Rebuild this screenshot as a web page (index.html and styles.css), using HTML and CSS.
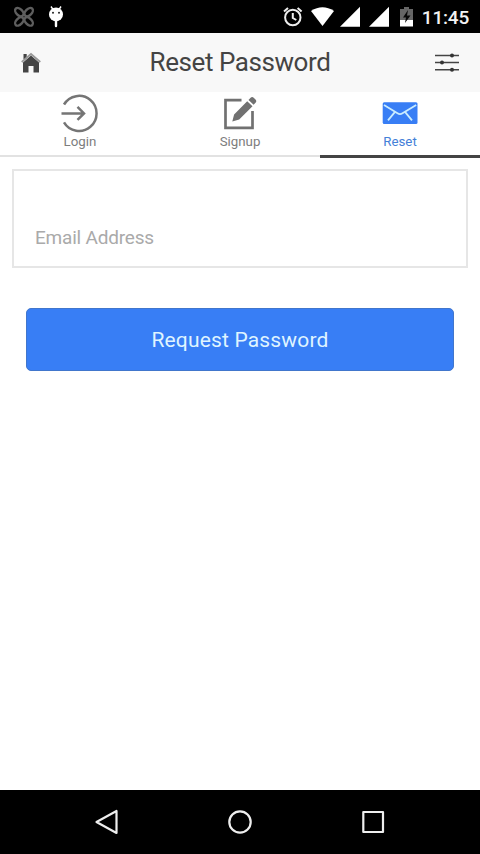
FILE: index.html
```html
<!DOCTYPE html>
<html lang="en">
<head>
<meta charset="utf-8">
<meta name="viewport" content="width=device-width, initial-scale=1">
<title>Reset Password</title>
<link rel="stylesheet" href="styles.css">
</head>
<body>
<div class="screen">
  <div class="status">
    <div class="status-group">
      <svg class="knot" width="22" height="22" viewBox="0 0 22 22" aria-hidden="true">
        <g fill="none" stroke="#5e5e5e" stroke-width="2.400">
          <ellipse cx="6.300" cy="6.100" rx="5" ry="3.100" transform="rotate(45 6.300 6.100)"/>
          <ellipse cx="15.700" cy="6.100" rx="5" ry="3.100" transform="rotate(-45 15.700 6.100)"/>
          <ellipse cx="6.300" cy="15.500" rx="5" ry="3.100" transform="rotate(-45 6.300 15.500)"/>
          <ellipse cx="15.700" cy="15.500" rx="5" ry="3.100" transform="rotate(45 15.700 15.500)"/>
        </g>
      </svg>
      <svg width="16" height="22" viewBox="0 0 16 22" aria-hidden="true">
        <path d="M3 .5l2 3M13 .5l-2 3" stroke="#fff" stroke-width="1.400"/>
        <circle cx="8" cy="8.400" r="7" fill="#fff"/>
        <path d="M8 15v5" stroke="#fff" stroke-width="2.400" stroke-linecap="round"/>
        <circle cx="5" cy="6.800" r="1" fill="#222"/><circle cx="11" cy="6.800" r="1" fill="#222"/>
      </svg>
    </div>
    <div class="status-group right">
      <svg width="20" height="22" viewBox="0 0 20 22" fill="none" stroke="#eee" stroke-width="2" aria-hidden="true">
        <circle cx="9.800" cy="11.500" r="7.700"/><path d="M9.800 7v5l3.500 2M1 5.500l4-3.500M18.600 5.500l-4-3.500"/>
      </svg>
      <svg class="wifi" width="24" height="22" viewBox="0 0 24 22" aria-hidden="true"><path d="M0 5Q11.500-2.500 23 5L11.500 20z" fill="#fff"/></svg>
      <svg class="signal" width="20" height="22" viewBox="0 0 20 22" aria-hidden="true"><path d="M20 .8v20H0z" fill="#fff"/></svg>
      <svg class="signal" width="20" height="22" viewBox="0 0 20 22" aria-hidden="true"><path d="M20 .8v20H0z" fill="#fff"/></svg>
      <svg class="battery" width="13" height="22" viewBox="0 0 13 22" aria-hidden="true">
        <path d="M0 3h4V1h5v2h4v12H0z" fill="#666"/><path d="M0 14h13v6.500H0z" fill="#fff"/><path d="M8 4L3 11.500h3L5 17l5.500-7.500H7z" fill="#080808"/>
      </svg>
      <span class="time">11:45</span>
    </div>
  </div>

  <header class="header">
    <svg width="20" height="22" viewBox="0 0 20 22" aria-hidden="true">
      <path d="M2.500 2h3.200v5H2.500z" fill="#444"/>
      <path d="M10 3.500L18 10.500v10h-5.500V14h-5v6.500H2v-10z" fill="#444"/>
      <path d="M.7 10L10 2l9.300 8" fill="none" stroke="#999" stroke-width="1.800"/>
    </svg>
    <h1 class="title">Reset Password</h1>
    <svg width="24" height="20" viewBox="0 0 24 20" aria-hidden="true">
      <path d="M0 2.500h24M0 9.500h24M0 16.800h24" stroke="#444" stroke-width="1.500"/>
      <g fill="#333"><circle cx="17" cy="2.500" r="2"/><circle cx="7" cy="9.500" r="2"/><circle cx="17" cy="16.800" r="2"/></g>
    </svg>
  </header>

  <nav class="tabs">
    <a class="tab">
      <svg width="40" height="40" viewBox="0 0 40 40" fill="none" stroke="#757575" stroke-width="2.500" aria-hidden="true">
        <path d="M4 11.500A17.500 17.500 0 1 1 4 29.300M1.500 20.400H24M17.500 13.900L24 20.400l-6.500 6.500"/>
      </svg>
      <span>Login</span>
    </a>
    <a class="tab">
      <svg width="40" height="40" viewBox="0 0 40 40" aria-hidden="true">
        <path d="M21.500 7.200H5.500v27.600h27V18" fill="none" stroke="#717171" stroke-width="2.700"/>
        <path d="M12.300 28.600l1.800-7L27.200 8.200l5.300 5L19.200 26.500zM28.500 6.900l2.100-2.100c1-1 2.100-1 3.100 0l1.800 1.800c1 1 1 2.100 0 3.100l-1.900 2.100z" fill="#717171"/>
      </svg>
      <span>Signup</span>
    </a>
    <a class="tab active">
      <svg width="40" height="40" viewBox="0 0 40 40" aria-hidden="true">
        <rect x="2.700" y="9.300" width="34.800" height="21.700" rx="1.500" fill="#387ef5"/>
        <path d="M4 12l13.500 8.300q2.500 1.600 5 0L36.200 12M14.800 19.200L8 27.300M25.200 19.200l6.800 8.100" fill="none" stroke="#c9ecff" stroke-width="1.800"/>
      </svg>
      <span>Reset</span>
    </a>
  </nav>

  <main class="content">
    <div class="field">Email Address</div>
    <div class="submit">Request Password</div>
  </main>

  <footer class="navbar">
    <svg width="26" height="28" viewBox="0 0 26 28" aria-hidden="true"><path d="M22.500 3v22L2.500 14z"/></svg>
    <svg width="26" height="28" viewBox="0 0 26 28" aria-hidden="true"><circle cx="13" cy="14" r="10.700"/></svg>
    <svg width="26" height="28" viewBox="0 0 26 28" aria-hidden="true"><rect x="3.300" y="4" width="19.700" height="20"/></svg>
  </footer>
</div>
</body>
</html>
```
FILE: styles.css
```css
* { box-sizing: border-box; }

body {
  margin: 0;
  font-family: Roboto, sans-serif;
  background: #fff;
}

svg { display: block; flex: none; }

.screen {
  display: flex;
  flex-direction: column;
  height: 854px;
  width: 480px;
  overflow: hidden;
}

.status {
  display: flex;
  justify-content: space-between;
  height: 33px;
  padding: 6px 11px 0 13px;
  background: #000;
}

.status-group { display: flex; gap: 13px; }
.right { gap: 0; }
.wifi { margin-left: 8px; }
.signal { margin-left: 5px; }
.signal + .signal { margin-left: 9px; }
.battery { margin-left: 11px; }

.time {
  margin-left: 9px;
  color: #f3f3f3;
  font-size: 19px;
  font-weight: 500;
  letter-spacing: -0.2px;
  line-height: 23px;
}

.header {
  display: flex;
  align-items: center;
  justify-content: space-between;
  height: 59px;
  padding: 0 21px;
  background: #f8f8f8;
}

.title {
  margin: 0;
  padding: 0 0 1px 4px;
  color: #444;
  font-size: 26px;
  font-weight: 400;
  letter-spacing: -0.43px;
}

.tabs {
  display: flex;
  height: 66px;
}

.tab {
  display: flex;
  flex: 1;
  flex-direction: column;
  align-items: center;
  height: 65px;
  padding-top: 1px;
  border-bottom: 2px solid #e2e2e2;
  color: #7d7d7d;
  font-size: 13.3px;
  line-height: 18px;
}

.active {
  height: 66px;
  border-bottom: 3px solid #444;
  color: #4480d8;
}

.content {
  flex: 1;
  padding: 11px 12px 0;
}

.field {
  display: flex;
  align-items: flex-end;
  height: 99px;
  padding: 0 21px 17px;
  border: 2px solid #e6e6e6;
  color: #aaa;
  font-size: 19px;
  letter-spacing: -0.2px;
  line-height: 22px;
}

.submit {
  display: flex;
  align-items: center;
  justify-content: center;
  height: 63px;
  margin: 40px 14px 0;
  border: 1px solid #4176cc;
  border-radius: 5px;
  background: #387ef5;
  color: #dff4ff;
  font-size: 21px;
  letter-spacing: 0.17px;
}

.navbar {
  display: flex;
  justify-content: space-between;
  height: 64px;
  padding: 18px 94px 0;
  background: #000;
  fill: none;
  stroke: #eee;
  stroke-width: 2.200;
  stroke-linejoin: round;
}
```
